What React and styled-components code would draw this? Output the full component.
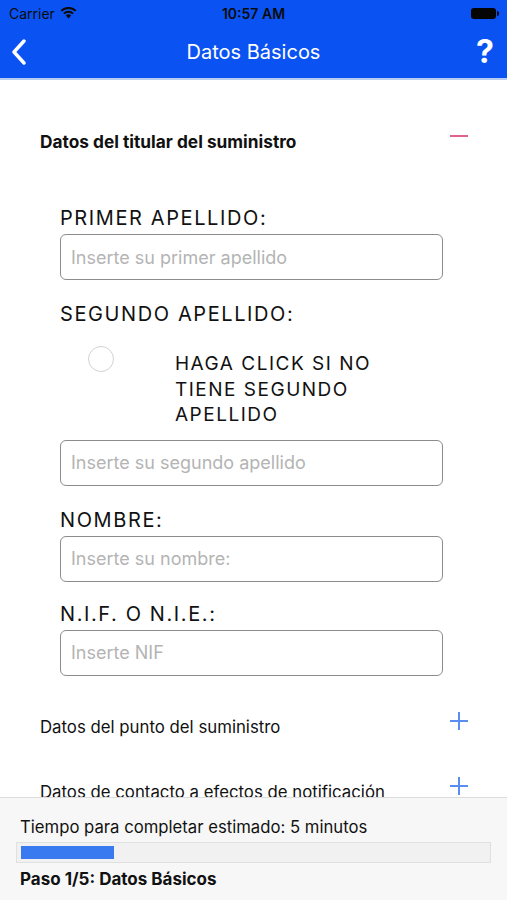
import React from 'react'
import styled, { createGlobalStyle } from 'styled-components'

const GlobalStyle = createGlobalStyle`
    body {
        margin: 0;
        font-family: Inter, "Liberation Sans", sans-serif;
        background: white;
    }
`

const Page = styled.div`
    width: 507px;
    height: 900px;
    display: flex;
    flex-direction: column;
    overflow: hidden;
`

const Top = styled.div`
    background: #0a53f2;
    border-bottom: 2px solid #b9cdf0;
`

const StatusBar = styled.div`
    height: 26px;
    display: flex;
    align-items: center;
    justify-content: space-between;
    padding: 0 9px;
    font-size: 14px;
    color: #0b0b0b;
    position: relative;
`

const Carrier = styled.div`
    display: flex;
    align-items: center;
    gap: 5px;
`

const Clock = styled.div`
    position: absolute;
    left: 0;
    right: 0;
    text-align: center;
    font-weight: 600;
    font-size: 14px;
`

const Battery = styled.div`
    width: 25px;
    height: 11px;
    background: #050505;
    border-radius: 3px;
    margin-right: 2px;
    position: relative;

    &:after {
        content: '';
        position: absolute;
        right: -3px;
        top: 3px;
        width: 2px;
        height: 5px;
        background: #050505;
        border-radius: 0 2px 2px 0;
    }
`

const NavBar = styled.div`
    height: 52px;
    display: flex;
    align-items: center;
    justify-content: space-between;
    padding: 0 10px 0 10px;
    color: white;
`

const Title = styled.div`
    font-size: 20px;
    font-weight: 400;
    margin-left: 6px;
`

const Help = styled.div`
    font-size: 32px;
    font-weight: 700;
    width: 24px;
    text-align: center;
    line-height: 1;
`

const Content = styled.div`
    flex: 1;
    overflow: hidden;
    padding: 0 39px 0 40px;
`

const SectionHeader = styled.div`
    display: flex;
    justify-content: space-between;
    align-items: center;
    height: 44px;
    margin-top: ${p => p.$top || 0}px;
    font-size: ${p => (p.$open ? 17.3 : 16.8)}px;
    font-weight: ${p => (p.$open ? 700 : 400)};
    color: #111;
`

const Toggle = styled.div`
    width: 18px;
    height: 18px;
    margin-bottom: 11px;
    position: relative;

    &:before, &:after {
        content: '';
        position: absolute;
        background: ${p => (p.$open ? '#e0618d' : '#5b8df0')};
    }
    &:before {
        left: 0;
        right: 0;
        top: 8px;
        height: 2px;
    }
    &:after {
        display: ${p => (p.$open ? 'none' : 'block')};
        top: 0;
        bottom: 0;
        left: 8px;
        width: 2px;
    }
`

const Form = styled.div`
    padding: 0 0 0 20px;
    width: 383px;
    margin-top: 20px;
`

const Label = styled.div`
    font-size: 20px;
    letter-spacing: 1.6px;
    line-height: 24px;
    color: #111;
    margin-top: ${p => p.$top ?? 22}px;
    margin-bottom: 4px;
`

const Input = styled.input`
    box-sizing: border-box;
    width: 100%;
    height: 46px;
    border: 1.5px solid #8c8c8c;
    border-radius: 6px;
    padding: 0 10px;
    font-family: inherit;
    font-size: 18px;
    display: block;
    outline: none;

    &::placeholder {
        color: #b4b4b4;
    }
`

const RadioRow = styled.div`
    display: flex;
    align-items: flex-start;
    padding-left: 28px;
    margin: 11px 0 12px;
`

const Radio = styled.div`
    width: 24px;
    height: 24px;
    border-radius: 50%;
    border: 1px solid #d3d3d3;
    margin-top: 9px;
    flex-shrink: 0;
`

const RadioText = styled.div`
    margin-left: 61px;
    padding-top: 14px;
    font-size: 19px;
    letter-spacing: 1.5px;
    line-height: 25.5px;
    color: #111;
    width: 220px;
`

const Footer = styled.div`
    height: 103px;
    background: #f7f7f7;
    border-top: 1px solid #dcdcdc;
    padding: 19px 16px 0 16px;
    box-sizing: border-box;
`

const FooterText = styled.div`
    font-size: ${p => (p.$bold ? 17 : 16.7)}px;
    color: #111;
    padding-left: 4px;
    font-weight: ${p => (p.$bold ? 700 : 400)};
    line-height: 20px;
`

const Track = styled.div`
    height: 21px;
    box-sizing: border-box;
    border: 1px solid #e0e0e0;
    background: #f1f1f1;
    margin: 5px 0 6px;
    padding: 3px 4px;
`

const Fill = styled.div`
    height: 100%;
    background: #3a7af0;
`

const Wifi = () => (
    <svg width="17" height="12" viewBox="0 0 17 12">
        <path d="M8.5 11.5 L5.8 8.6 A3.9 3.9 0 0 1 11.2 8.6 Z" fill="#0b0b0b" />
        <path d="M3.9 6.6 A6.6 6.6 0 0 1 13.1 6.6" stroke="#0b0b0b" strokeWidth="2" fill="none" />
        <path d="M1.2 3.9 A10.4 10.4 0 0 1 15.8 3.9" stroke="#0b0b0b" strokeWidth="2" fill="none" />
    </svg>
)

const Back = () => (
    <svg width="18" height="26" viewBox="0 0 18 26">
        <path d="M14 2 L4 13 L14 24" stroke="white" strokeWidth="3.4" fill="none" strokeLinecap="round" strokeLinejoin="round" />
    </svg>
)

const fields = [
    { label: 'NOMBRE:', placeholder: 'Inserte su nombre:', top: 22 },
    { label: 'N.I.F. O N.I.E.:', placeholder: 'Inserte NIF', top: 20 },
]

const App = () => {
    const progress = 20

    return (
        <Page>
            <GlobalStyle />
            <Top>
                <StatusBar>
                    <Carrier>Carrier <Wifi /></Carrier>
                    <Clock>10:57 AM</Clock>
                    <Battery />
                </StatusBar>
                <NavBar>
                    <Back />
                    <Title>Datos Básicos</Title>
                    <Help>?</Help>
                </NavBar>
            </Top>

            <Content>
                <SectionHeader $open $top={39}>
                    Datos del titular del suministro
                    <Toggle $open />
                </SectionHeader>

                <Form>
                    <Label $top={43}>PRIMER APELLIDO:</Label>
                    <Input placeholder="Inserte su primer apellido" />

                    <Label>SEGUNDO APELLIDO:</Label>
                    <RadioRow>
                        <Radio />
                        <RadioText>HAGA CLICK SI NO TIENE SEGUNDO APELLIDO</RadioText>
                    </RadioRow>
                    <Input placeholder="Inserte su segundo apellido" />

                    {fields.map(f => (
                        <React.Fragment key={f.label}>
                            <Label $top={f.top}>{f.label}</Label>
                            <Input placeholder={f.placeholder} />
                        </React.Fragment>
                    ))}
                </Form>

                <SectionHeader $top={29}>
                    Datos del punto del suministro
                    <Toggle />
                </SectionHeader>
                <SectionHeader $top={21}>
                    Datos de contacto a efectos de notificación
                    <Toggle />
                </SectionHeader>
            </Content>

            <Footer>
                <FooterText>Tiempo para completar estimado: 5 minutos</FooterText>
                <Track>
                    <Fill style={{ width: progress + '%' }} />
                </Track>
                <FooterText $bold>Paso 1/5: Datos Básicos</FooterText>
            </Footer>
        </Page>
    )
}

export default App
